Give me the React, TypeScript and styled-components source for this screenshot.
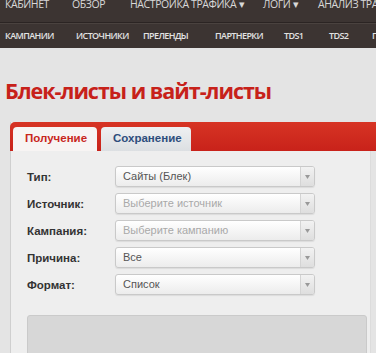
import React from "react";
import styled, { createGlobalStyle } from "styled-components";

const GlobalStyle = createGlobalStyle`
    html, body {
        margin: 0;
        padding: 0;
        background: #e4e4e4;
        overflow: hidden;
    }
    body {
        font-family: "Open Sans", "Liberation Sans", sans-serif;
    }
`;

const topItems = ["КАБИНЕТ", "ОБЗОР", "НАСТРОЙКА ТРАФИКА ▾", "ЛОГИ ▾", "АНАЛИЗ ТРАФИКА"];
const subItems = ["КАМПАНИИ", "ИСТОЧНИКИ", "ПРЕЛЕНДЫ", "ПАРТНЕРКИ", "TDS1", "TDS2", "ПРОЧЕЕ"];

const fields = [
    { label: "Тип:", value: "Сайты (Блек)", placeholder: false },
    { label: "Источник:", value: "Выберите источник", placeholder: true },
    { label: "Кампания:", value: "Выберите кампанию", placeholder: true },
    { label: "Причина:", value: "Все", placeholder: false },
    { label: "Формат:", value: "Список", placeholder: false },
];

const App = () => {
    return (
        <Page>
            <GlobalStyle />
            <NavBar>
                <TopRow>
                    {topItems.map((item) => (
                        <TopLink key={item}>{item}</TopLink>
                    ))}
                </TopRow>
                <SubRow>
                    {subItems.map((item) => (
                        <SubLink key={item}>{item}</SubLink>
                    ))}
                </SubRow>
            </NavBar>
            <Content>
                <Title>Блек-листы и вайт-листы</Title>
                <Panel>
                    <TabBar>
                        <Tab active>Получение</Tab>
                        <Tab>Сохранение</Tab>
                    </TabBar>
                    <PanelBody>
                        <Form>
                            {fields.map((f) => (
                                <Row key={f.label}>
                                    <Label>{f.label}</Label>
                                    <Select>
                                        <SelectText placeholder={f.placeholder}>{f.value}</SelectText>
                                        <Arrow>
                                            <svg width="5" height="4" viewBox="0 0 5 4">
                                                <path d="M0 0 L5 0 L2.5 4 Z" fill="#999" />
                                            </svg>
                                        </Arrow>
                                    </Select>
                                </Row>
                            ))}
                        </Form>
                        <Output />
                    </PanelBody>
                </Panel>
            </Content>
        </Page>
    );
};

interface TabProps {
    active?: boolean;
}

interface TextProps {
    placeholder?: boolean;
}

const Page = styled.div`
    width: 376px;
    height: 353px;
    overflow: hidden;
    background: #e4e4e4;
`;

const NavBar = styled.div`
    background: #3c3432;
    height: 48px;
    overflow: hidden;
`;

const TopRow = styled.div`
    display: grid;
    grid-template-columns: 67px 58px 133px 55px auto;
    height: 22px;
    padding-left: 5px;
    border-bottom: 1px solid #2b2423;
    box-shadow: 0 1px 0 #4a423f;
    white-space: nowrap;
`;

const TopLink = styled.div`
    font-size: 10.5px;
    line-height: 9px;
    color: #d8d8d8;
    letter-spacing: -0.4px;
`;

const SubRow = styled.div`
    display: grid;
    grid-template-columns: 71px 67px 72px 69px 45px 43px auto;
    align-items: center;
    height: 24px;
    padding-left: 5px;
    white-space: nowrap;
`;

const SubLink = styled.div`
    font-size: 9px;
    font-weight: 600;
    color: #e2e2e2;
    letter-spacing: -0.6px;
`;

const Content = styled.div`
    padding: 0 0 0 10px;
`;

const Title = styled.h1`
    margin: 0;
    padding: 30px 0 19px 0;
    margin-left: -5px;
    font-size: 21.5px;
    line-height: 25px;
    font-weight: 700;
    letter-spacing: -1px;
    color: #c7211a;
`;

const Panel = styled.div`
    width: 359px;
    border-left: 1px solid #cfcfcf;
    border-right: 1px solid #dcdcdc;
    background: #eeeeee;
`;

const TabBar = styled.div`
    display: flex;
    align-items: flex-end;
    gap: 4px;
    height: 29px;
    padding-left: 3px;
    background: linear-gradient(#d73424, #c8221a);
    border-radius: 5px 0 0 0;
    margin-left: -1px;
    width: 370px;
`;

const Tab = styled.div<TabProps>`
    height: 24px;
    box-sizing: border-box;
    padding: 5px 11px 0 12px;
    border-radius: 4px 4px 0 0;
    font-family: "Liberation Sans", Arial, sans-serif;
    font-size: 11.5px;
    font-weight: 700;
    background: ${({ active }) => (active ? "#f7f4f3" : "linear-gradient(#eef0f2, #dcdfe2)")};
    color: ${({ active }) => (active ? "#c8261c" : "#2d4d7c")};
    width: ${({ active }) => (active ? "84px" : "90px")};
`;

const PanelBody = styled.div`
    padding: 15px 0 0 0;
    height: 200px;
`;

const Form = styled.div`
    display: flex;
    flex-direction: column;
    gap: 6px;
    padding-left: 16px;
`;

const Row = styled.div`
    display: flex;
    align-items: center;
    height: 21px;
`;

const Label = styled.div`
    width: 88px;
    font-family: "Liberation Sans", Arial, sans-serif;
    font-size: 11.5px;
    font-weight: 700;
    color: #333333;
`;

const Select = styled.div`
    display: flex;
    align-items: stretch;
    width: 200px;
    height: 21px;
    box-sizing: border-box;
    border: 1px solid #c9c9c9;
    border-radius: 3px;
    background: linear-gradient(#ffffff, #ececec);
    box-shadow: 0 1px 1px rgba(0, 0, 0, 0.08);
`;

const SelectText = styled.div<TextProps>`
    flex: 1;
    padding-left: 7px;
    font-family: "Liberation Sans", Arial, sans-serif;
    font-size: 11px;
    line-height: 19px;
    color: ${({ placeholder }) => (placeholder ? "#a9a9a9" : "#555555")};
`;

const Arrow = styled.div`
    width: 13px;
    display: flex;
    align-items: center;
    justify-content: center;
    border-left: 1px solid #d4d4d4;
    background: linear-gradient(#f2f2f2, #dedede);
    border-radius: 0 2px 2px 0;
`;

const Output = styled.div`
    margin: 20px 3px 0 16px;
    height: 60px;
    background: #d7d7d7;
    border: 1px solid #cacaca;
    border-radius: 3px;
`;

export default App;
